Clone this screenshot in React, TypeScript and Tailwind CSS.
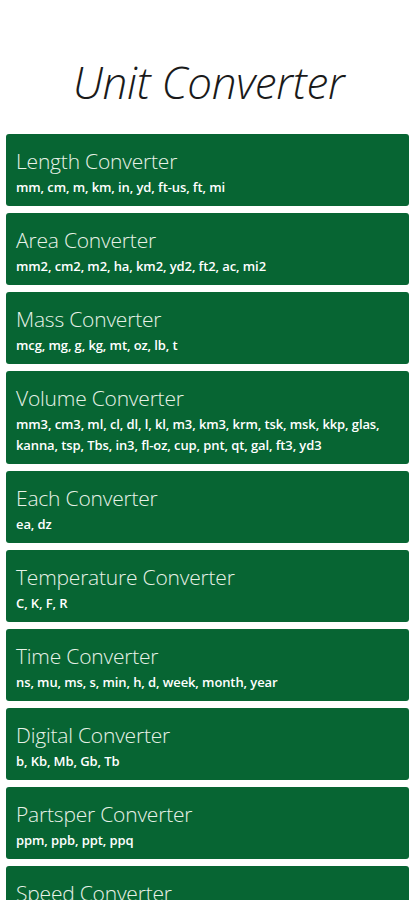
import React from "react";

const items = [
  { t: "Length Converter", s: "mm, cm, m, km, in, yd, ft-us, ft, mi" },
  { t: "Area Converter", s: "mm2, cm2, m2, ha, km2, yd2, ft2, ac, mi2" },
  { t: "Mass Converter", s: "mcg, mg, g, kg, mt, oz, lb, t" },
  {
    t: "Volume Converter",
    s: "mm3, cm3, ml, cl, dl, l, kl, m3, km3, krm, tsk, msk, kkp, glas, kanna, tsp, Tbs, in3, fl-oz, cup, pnt, qt, gal, ft3, yd3",
  },
  { t: "Each Converter", s: "ea, dz" },
  { t: "Temperature Converter", s: "C, K, F, R" },
  { t: "Time Converter", s: "ns, mu, ms, s, min, h, d, week, month, year" },
  { t: "Digital Converter", s: "b, Kb, Mb, Gb, Tb" },
  { t: "Partsper Converter", s: "ppm, ppb, ppt, ppq" },
  { t: "Speed Converter", s: "m/s, km/h, m/h, knot, ft/s" },
];

export default function App() {
  return (
    <div className="w-[411px] h-[900px] overflow-hidden bg-white" style={{ fontFamily: '"Open Sans", "Noto Sans", sans-serif' }}>
      <div className="h-[134px] flex items-center justify-center pt-[30px]">
        <h1 className="text-[44px] font-light italic text-[#1a1a1a] tracking-[-0.3px] pl-[6px]">Unit Converter</h1>
      </div>
      <div className="flex flex-col gap-[7px] pl-[6px] pr-[2px]">
        {items.map((it) => (
          <div key={it.t} className="bg-[#076533] rounded-[3px] pl-[10px] pr-[12px] pt-[14px] pb-[8px]">
            <div className="text-[21px] leading-[26px] font-light text-[#e8f2e8] tracking-[-0.2px]">{it.t}</div>
            <div className="mt-[3px] text-[13px] leading-[21px] font-semibold text-white tracking-[-0.1px]">{it.s}</div>
          </div>
        ))}
      </div>
    </div>
  );
}
